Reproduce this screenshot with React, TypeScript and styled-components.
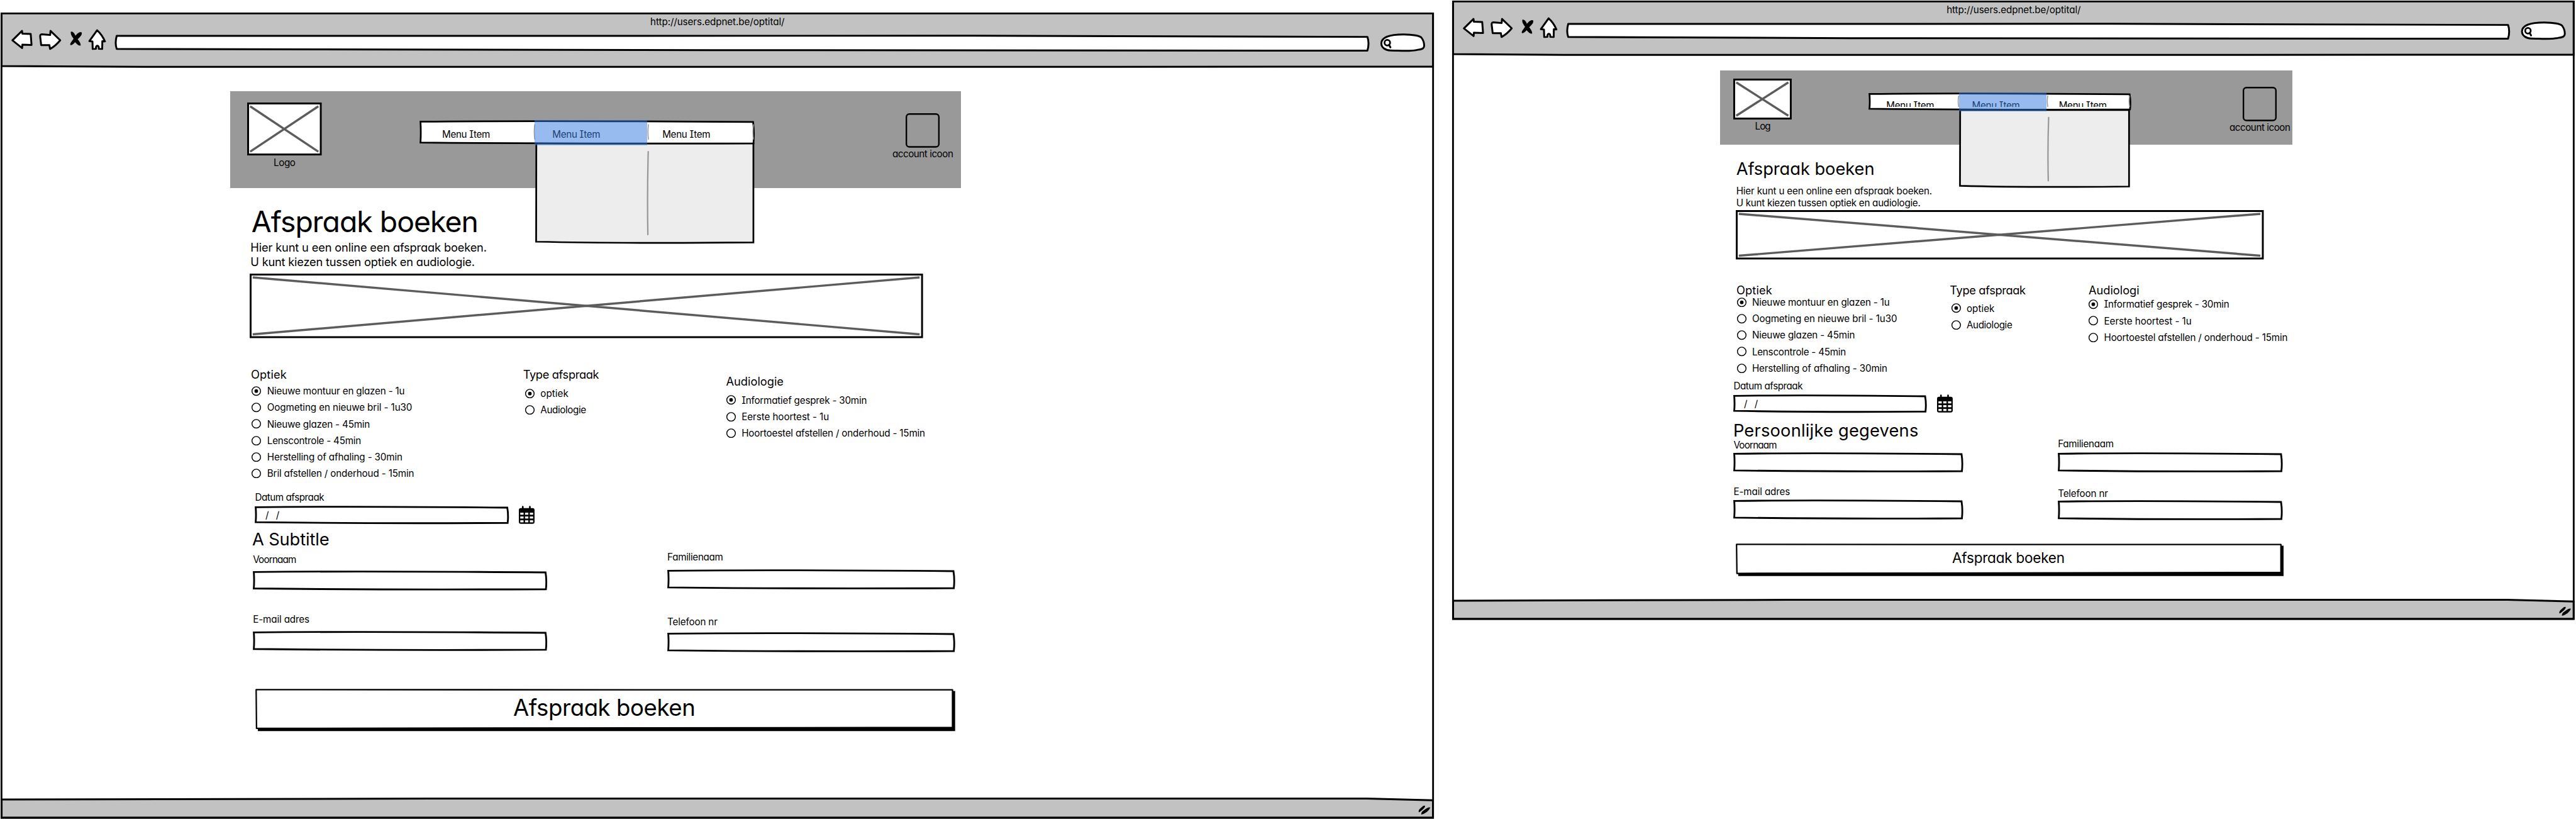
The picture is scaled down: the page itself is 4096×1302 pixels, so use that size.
import React, { useLayoutEffect, useRef, useState } from "react";
import styled, { createGlobalStyle } from "styled-components";

// All measures are in design units; the page is drawn at this ratio.
const RATIO = 4096 / 6894;
const u = (n: number) => `${(n * RATIO).toFixed(3)}px`;

const Global = createGlobalStyle`
  * { box-sizing: border-box; }
  html, body { margin: 0; background: #fff; }
  body {
    font-family: Inter, "Open Sans", "Liberation Sans", sans-serif;
    font-feature-settings: "cv11", "cv08", "calt" 0;
    color: #000;
  }
`;

/* ---------- primitives ---------- */

const Line = styled.div<{ $size: number; $mt?: number; $ml?: number; $weight?: number }>`
  flex: none;
  width: max-content;
  margin-top: ${(p) => u(p.$mt ?? 0)};
  margin-left: ${(p) => u(p.$ml ?? 0)};
  font-size: ${(p) => u(p.$size)};
  line-height: ${(p) => u(p.$size)};
  font-weight: ${(p) => p.$weight ?? 400};
  white-space: pre;
`;

type TextProps = { children: string; fit: number; size?: number; mt?: number; ml?: number; weight?: number };

// A line of text whose tracking is adjusted so that it spans `fit` units.
function Text({ children, fit, size = 25.6, mt, ml, weight }: TextProps) {
  const ref = useRef<HTMLDivElement>(null);
  const [tracking, setTracking] = useState(0);
  useLayoutEffect(() => {
    const el = ref.current;
    if (!el) return;
    el.style.letterSpacing = "0px";
    const natural = el.getBoundingClientRect().width;
    setTracking((fit * RATIO - natural) / children.length);
  }, [children, fit]);
  return (
    <Line ref={ref} $size={size} $mt={mt} $ml={ml} $weight={weight} style={{ letterSpacing: `${tracking}px` }}>
      {children}
    </Line>
  );
}

const Outline = styled.svg`
  position: absolute;
  inset: 0;
  width: 100%;
  height: 100%;
  overflow: visible;
  pointer-events: none;
`;

const wobble = (w: number, h: number) =>
  `M2.6,4 Q${w * 0.36},1 ${w - 4},5 Q${w - 0.5},${h / 2} ${w - 3},${h - 3} Q${w * 0.45},${h - 1} 2.6,${h - 5} Q4.2,${h / 2} 2.6,4Z`;

const Box = styled.div<{ $w: number; $h: number; $mt?: number; $ml?: number }>`
  position: relative;
  flex: none;
  width: ${(p) => u(p.$w)};
  height: ${(p) => u(p.$h)};
  margin-top: ${(p) => u(p.$mt ?? 0)};
  margin-left: ${(p) => u(p.$ml ?? 0)};
`;

const FieldBox = styled(Box)`
  display: flex;
  align-items: center;
`;

const Slashes = styled.span`
  position: relative;
  padding-left: ${u(28)};
  font-size: ${u(25.6)};
  line-height: ${u(25.6)};
  word-spacing: ${u(11.5)};
`;

function Field({ w, h, mt, value }: { w: number; h: number; mt?: number; value?: string }) {
  return (
    <FieldBox $w={w} $h={h} $mt={mt}>
      <Outline viewBox={`0 0 ${w} ${h}`}>
        <path d={wobble(w, h)} fill="#fff" stroke="#000" strokeWidth={4.8} strokeLinejoin="miter" />
      </Outline>
      {value && <Slashes>{value}</Slashes>}
    </FieldBox>
  );
}

function Placeholder({ w, h, mt, ml }: { w: number; h: number; mt?: number; ml?: number }) {
  return (
    <Box $w={w} $h={h} $mt={mt} $ml={ml}>
      <Outline viewBox={`0 0 ${w} ${h}`}>
        <rect x={2.5} y={2.5} width={w - 5} height={h - 5} fill="#fff" stroke="#000" strokeWidth={5} />
        <path d={`M8,10 L${w - 9},${h - 10} M8,${h - 10} L${w - 9},10`} stroke="#5c5c5e" strokeWidth={5.8} />
      </Outline>
    </Box>
  );
}

/* ---------- browser chrome ---------- */

const Canvas = styled.main`
  display: flex;
  align-items: flex-start;
  width: ${u(6894)};
  height: ${u(2192)};
  overflow: hidden;
`;

const Frame = styled.section<{ $w: number; $h: number; $mt: number; $ml: number }>`
  position: relative;
  display: flex;
  flex-direction: column;
  flex: none;
  width: ${(p) => u(p.$w)};
  height: ${(p) => u(p.$h)};
  margin-top: ${(p) => u(p.$mt)};
  margin-left: ${(p) => u(p.$ml)};
`;

const TopBar = styled.header`
  position: relative;
  flex: none;
  display: flex;
  justify-content: center;
  height: ${u(147.5)};
`;

const UrlSlot = styled.div`
  position: relative;
`;

const Body = styled.div<{ $x: number }>`
  flex: 1;
  min-height: 0;
  display: flex;
  flex-direction: column;
  align-items: flex-start;
  padding-left: ${(p) => u(p.$x)};
`;

const BottomBar = styled.footer`
  position: relative;
  flex: none;
  height: ${u(56)};
`;

const ink = { stroke: "#000", strokeWidth: 5, strokeLinejoin: "round" as const, strokeLinecap: "round" as const };

function Chrome({ w }: { w: number }) {
  const r = w - 3836;
  return (
    <Outline viewBox={`0 0 ${w} 147.5`}>
      <path d={`M2.3,2.3 H${w - 2.4} V144.7 L${w * 0.6},145.3 L${w * 0.1},145.3 L2.3,143.2Z`} fill="#c2c2c2" {...ink} strokeLinejoin="miter" />
      <g transform="translate(-2 -33)" fill="#fff" {...ink}>
        <path d="M33.3,107.3 L59,82 L60,89.5 L82.3,90.3 L84.5,119.6 L60,119 L59.3,128Z" />
        <path d="M135.3,82 L134.3,93 Q121,91.5 112,91 Q107.3,91 107.6,97 L110.3,120 L132.3,120 L134,130.4 Q149,122 161.3,107Z" />
        <path d="M260,80.4 Q273,92 281,110 L274,109.5 L273.6,130.4 L264.6,130 Q265,121.6 260.5,121.8 Q256.5,122 256.8,130 L248.2,130.4 L247.6,110.4 L239.3,109.3Z" />
        <path d={`M312.5,95.3 L${2600 + r},95 L${3660 + r},98 Q${3666 + r},115 ${3660 + r},135 L${1900 + r},133.4 L312.5,130.4 Q307,115 312.5,95.3Z`} />
        <g transform={`translate(${r} 0)`}>
          <path d="M3697.3,115 C3698,98 3722,91.5 3757,91.5 C3780,91.5 3803,95 3806,102 C3811,109 3812,116 3812,122 C3811.5,129 3808,130.5 3795,132.5 C3775,138 3745,134.5 3722,134.3 C3708,134 3697.5,127 3697.3,115Z" />
          <circle cx="3713.3" cy="113.6" r="7.4" strokeWidth="4.6" />
          <path d="M3718,119.5 L3721.6,126" />
        </g>
      </g>
      <g transform="translate(-2 -33)" fill="#000">
        <path d="M190,84 Q197,82 202,95 Q206,88 213,85.5 Q220,84 219,89 Q219,95 208,104 Q217,115 216,121 Q211,123.5 201,112 Q195,120 189,120 Q186,118 192,110 Q195,106 197,103 Q187,90 190,84Z" />
      </g>
    </Outline>
  );
}

function Grip({ w }: { w: number }) {
  return (
    <Outline viewBox={`0 0 ${w} 56`}>
      <path d={`M2.3,5 L${w * 0.3},2.6 L${w - 180},2.6 L${w - 2.4},7 V53.6 H2.3Z`} fill="#c2c2c2" {...ink} strokeLinejoin="miter" />
      <g transform={`translate(${w} 0)`} fill="#000">
        <path d="M-40.5,39 Q-42,33 -34,27 Q-27,19.5 -23.5,22 Q-23,26 -29,31 Q-36,38 -40.5,39Z" />
        <path d="M-33.5,45.5 Q-35,39 -27,34 Q-15,24 -9.5,26.5 Q-12,33 -18,38 Q-28,45 -33.5,45.5Z" />
      </g>
    </Outline>
  );
}

/* ---------- site header ---------- */

const SiteHeader = styled.div<{ $w: number; $h: number; $mt: number }>`
  flex: none;
  display: flex;
  align-items: flex-start;
  width: ${(p) => u(p.$w)};
  height: ${(p) => u(p.$h)};
  margin-top: ${(p) => u(p.$mt)};
  background: #999;
`;

const Captioned = styled.div<{ $mt: number; $ml: number }>`
  flex: none;
  display: flex;
  flex-direction: column;
  align-items: center;
  margin-top: ${(p) => u(p.$mt)};
  margin-left: ${(p) => u(p.$ml)};
`;

const MenuItem = styled.div<{ $w: number; $pl: number; $pt: number; $clip?: number }>`
  position: relative;
  flex: none;
  width: ${(p) => u(p.$w)};
  height: ${(p) => (p.$clip ? u(p.$clip) : "100%")};
  padding: ${(p) => `${u(p.$pt)} 0 0 ${u(p.$pl)}`};
  overflow: hidden;
`;

const MenuBar = styled(Box)`
  display: flex;
  align-items: flex-start;
`;

const Highlight = styled.div<{ $x: number; $w: number }>`
  position: absolute;
  top: 0;
  bottom: ${u(-1.2)};
  left: ${(p) => u(p.$x)};
  width: ${(p) => u(p.$w)};
  background: rgba(53, 122, 224, 0.51);
`;

const DropPanel = styled.div<{ $x: number; $y: number; $w: number; $h: number }>`
  position: absolute;
  left: ${(p) => u(p.$x)};
  top: ${(p) => u(p.$y)};
  width: ${(p) => u(p.$w)};
  height: ${(p) => u(p.$h)};
`;

type MenuSpec = {
  ml: number; mt: number; w: number; h: number; pt: number; clip?: number; seams: number[];
  items: { w: number; pl: number }[];
  drop: { x: number; y: number; w: number; h: number; split: number; from: number; to: number };
};

function Menu({ m }: { m: MenuSpec }) {
  const d = m.drop;
  const [a, b] = m.items;
  return (
    <MenuBar $w={m.w} $h={m.h} $mt={m.mt} $ml={m.ml}>
      <DropPanel $x={d.x} $y={d.y} $w={d.w} $h={d.h}>
        <Outline viewBox={`0 0 ${d.w} ${d.h}`}>
          <path d={`M3,0 H${d.w - 3} L${d.w - 3},${d.h - 3} Q${d.w * 0.4},${d.h} 2.5,${d.h - 5}Z`} fill="#ededed" {...ink} strokeWidth={4.6} strokeLinejoin="miter" />
          <path d={`M${d.split + 1},${d.from} Q${d.split - 2},${(d.from + d.to) / 2} ${d.split},${d.to}`} fill="none" stroke="#999" strokeWidth={3.8} strokeLinecap="round" />
        </Outline>
      </DropPanel>
      <Outline viewBox={`0 0 ${m.w} ${m.h}`}>
        <path d={wobble(m.w, m.h)} fill="#fff" {...ink} strokeWidth={4.6} strokeLinejoin="miter" />
        {m.seams.map((x) => (
          <path key={x} d={`M${x},${m.h * 0.17} q-3,${m.h * 0.3} 0,${m.h * 0.63}`} fill="none" stroke="#999" strokeWidth={2.6} />
        ))}
      </Outline>
      {m.items.map((it, i) => (
        <MenuItem key={i} $w={it.w} $pl={it.pl} $pt={m.pt} $clip={m.clip}>
          <Text fit={128}>Menu Item</Text>
        </MenuItem>
      ))}
      <Highlight $x={a.w} $w={b.w} />
    </MenuBar>
  );
}

/* ---------- options ---------- */

const Groups = styled.div<{ $mt: number; $ml: number; $cols: number[] }>`
  flex: none;
  display: grid;
  grid-template-columns: ${(p) => p.$cols.map(u).join(" ")} auto;
  align-items: start;
  margin-top: ${(p) => u(p.$mt)};
  margin-left: ${(p) => u(p.$ml)};
`;

const Column = styled.div`
  display: flex;
  flex-direction: column;
  align-items: flex-start;
`;

const Options = styled.div<{ $mt: number; $ml: number }>`
  margin-top: ${(p) => u(p.$mt)};
  margin-left: ${(p) => u(p.$ml)};
`;

const Option = styled.label`
  display: flex;
  align-items: center;
  gap: ${u(15)};
  height: ${u(44)};
`;

const Radio = styled.svg`
  flex: none;
  width: ${u(26)};
  height: ${u(26)};
`;

type Group = { title: string; fit: number; mt?: number; gap: number; indent: number; rows: [string, number][] };

function OptionGroup({ g }: { g: Group }) {
  return (
    <Column>
      <Text size={30.7} fit={g.fit} mt={g.mt}>{g.title}</Text>
      <Options $mt={g.gap} $ml={g.indent}>
        {g.rows.map(([label, fit], i) => (
          <Option key={label}>
            <Radio viewBox="0 0 26 26">
              <circle cx="12.6" cy="13" r="11.5" fill="#fff" stroke="#000" strokeWidth="2.4" />
              {i === 0 && <circle cx="12.6" cy="13" r="4.8" />}
            </Radio>
            <Text fit={fit}>{label}</Text>
          </Option>
        ))}
      </Options>
    </Column>
  );
}

/* ---------- form ---------- */

const DateRow = styled.div<{ $ml: number }>`
  flex: none;
  display: flex;
  align-items: flex-start;
  gap: ${u(26.5)};
  margin-top: ${u(10.5)};
  margin-left: ${(p) => u(p.$ml)};
`;

const CalendarSvg = styled.svg`
  flex: none;
  width: ${u(42)};
  height: ${u(49)};
`;

function Calendar() {
  return (
    <CalendarSvg viewBox="0 0 42 49">
      <path d="M10.5,2.5 V10 M29.5,2.5 V10" stroke="#000" strokeWidth="4.4" strokeLinecap="round" />
      <rect x="0" y="6.5" width="42" height="42" rx="5.5" />
      {[18.6, 28.8, 39].map((y) =>
        [3.8, 16.6, 29.4].map((x) => <rect key={`${x}-${y}`} x={x} y={y} width="8.8" height="5.4" fill="#fff" />)
      )}
    </CalendarSvg>
  );
}

const SubmitButton = styled.button<{ $w: number; $h: number; $mt: number; $ml: number; $pt: number }>`
  position: relative;
  flex: none;
  display: flex;
  justify-content: center;
  align-items: flex-start;
  width: ${(p) => u(p.$w)};
  height: ${(p) => u(p.$h)};
  margin: ${(p) => `${u(p.$mt)} 0 0 ${u(p.$ml)}`};
  padding: ${(p) => `${u(p.$pt)} ${u(7)} 0 0`};
  appearance: none;
  border: 0;
  background: none;
  color: inherit;
  font: inherit;
  font-feature-settings: inherit;
`;

const ButtonLabel = styled.div`
  position: relative;
`;

type FormCell = { label: string; fit: number; mt: number; gap: number; h: number };

type PageSpec = {
  frame: { w: number; h: number; mt: number; ml: number };
  x: number;
  header: { w: number; h: number; mt: number };
  logo: { ml: number; mt: number; w: number; h: number; gap: number; text: string; fit: number };
  menu: MenuSpec;
  account: { ml: number; mt: number; gap: number };
  title: { size: number; fit: number; mt: number; ml: number };
  intro: { size: number; ml: number; mt: [number, number]; fit: [number, number] };
  banner: { w: number; h: number; mt: number; ml: number };
  groups: { mt: number; ml: number; cols: number[]; list: Group[] };
  date: { mt: number; ml: number; w: number };
  subtitle: { text: string; fit: number; mt: number; ml: number };
  form: { ml: number; cols: number[]; widths: number[]; cells: FormCell[][] };
  button: { mt: number; ml: number; w: number; h: number; pt: number; size: number; fit: number };
};

function BrowserPage({ p }: { p: PageSpec }) {
  const { frame: f, button: b } = p;
  return (
    <Frame $w={f.w} $h={f.h} $mt={f.mt} $ml={f.ml}>
      <Outline viewBox={`0 0 ${f.w} ${f.h}`}>
        <rect x={2.3} y={2.3} width={f.w - 4.7} height={f.h - 4.7} fill="none" stroke="#000" strokeWidth={4.8} />
      </Outline>
      <TopBar>
        <Chrome w={f.w} />
        <UrlSlot>
          <Text fit={359} mt={12.8}>http://users.edpnet.be/optital/</Text>
        </UrlSlot>
      </TopBar>
      <Body $x={p.x}>
        <SiteHeader $w={p.header.w} $h={p.header.h} $mt={p.header.mt}>
          <Captioned $mt={p.logo.mt} $ml={p.logo.ml}>
            <Placeholder w={p.logo.w} h={p.logo.h} />
            <Text fit={p.logo.fit} mt={p.logo.gap}>{p.logo.text}</Text>
          </Captioned>
          <Menu m={p.menu} />
          <Captioned $mt={p.account.mt} $ml={p.account.ml}>
            <Box $w={91} $h={92}>
              <Outline viewBox="0 0 91 92">
                <rect x="2" y="2" width="87" height="88" rx="8" fill="none" stroke="#000" strokeWidth="4" />
              </Outline>
            </Box>
            <Text fit={162.5} mt={p.account.gap}>account icoon</Text>
          </Captioned>
        </SiteHeader>
        <Text {...p.title}>Afspraak boeken</Text>
        <Text size={p.intro.size} ml={p.intro.ml} mt={p.intro.mt[0]} fit={p.intro.fit[0]}>Hier kunt u een online een afspraak boeken.</Text>
        <Text size={p.intro.size} ml={p.intro.ml} mt={p.intro.mt[1]} fit={p.intro.fit[1]}>U kunt kiezen tussen optiek en audiologie.</Text>
        <Placeholder {...p.banner} />
        <Groups $mt={p.groups.mt} $ml={p.groups.ml} $cols={p.groups.cols}>
          {p.groups.list.map((g) => <OptionGroup key={g.title} g={g} />)}
        </Groups>
        <Text fit={184.5} mt={p.date.mt} ml={p.date.ml}>Datum afspraak</Text>
        <DateRow $ml={p.date.ml}>
          <Field w={p.date.w} h={49} value="/ /" />
          <Calendar />
        </DateRow>
        <Text size={46} fit={p.subtitle.fit} mt={p.subtitle.mt} ml={p.subtitle.ml}>{p.subtitle.text}</Text>
        <Groups $mt={0} $ml={p.form.ml} $cols={p.form.cols}>
          {p.form.cells.map((cells, c) => (
            <Column key={c}>
              {cells.map((cell) => (
                <React.Fragment key={cell.label}>
                  <Text fit={cell.fit} mt={cell.mt}>{cell.label}</Text>
                  <Field w={p.form.widths[c]} h={cell.h} mt={cell.gap} />
                </React.Fragment>
              ))}
            </Column>
          ))}
        </Groups>
        <SubmitButton type="button" $w={b.w} $h={b.h} $mt={b.mt} $ml={b.ml} $pt={b.pt}>
          <Outline viewBox={`0 0 ${b.w} ${b.h}`}>
            <path d={`M6.5,6 H${b.w} V${b.h} H6.5Z`} />
            <path d={`M2,2.4 L${b.w - 7},2.8 L${b.w - 7},${b.h - 9.5} Q${b.w * 0.5},${b.h - 7} 3,${b.h - 7}Z`} fill="#fff" stroke="#000" strokeWidth={3.8} strokeLinejoin="round" />
          </Outline>
          <ButtonLabel>
            <Text size={b.size} fit={b.fit}>Afspraak boeken</Text>
          </ButtonLabel>
        </SubmitButton>
      </Body>
      <BottomBar>
        <Grip w={f.w} />
      </BottomBar>
    </Frame>
  );
}

const optiekRows: [string, number][] = [
  ["Nieuwe montuur en glazen - 1u", 368],
  ["Oogmeting en nieuwe bril - 1u30", 388],
  ["Nieuwe glazen - 45min", 275],
  ["Lenscontrole - 45min", 251],
  ["Herstelling of afhaling - 30min", 362],
];
const typeRows: [string, number][] = [["optiek", 75], ["Audiologie", 122]];
const audioRows: [string, number][] = [
  ["Informatief gesprek - 30min", 335],
  ["Eerste hoortest - 1u", 234],
  ["Hoortoestel afstellen / onderhoud - 15min", 491],
];

const large: PageSpec = {
  frame: { w: 3836, h: 2157, mt: 33, ml: 2 },
  x: 614,
  header: { w: 1955.5, h: 259.8, mt: 63.7 },
  logo: { ml: 45.5, mt: 30, w: 199.5, h: 141.5, gap: 6.4, text: "Logo", fit: 58 },
  menu: {
    ml: 261.7, mt: 78, w: 897, h: 65, pt: 24.7, seams: [308.5, 613, 894],
    items: [{ w: 308, pl: 60.5 }, { w: 301, pl: 47.5 }, { w: 288, pl: 41 }],
    drop: { x: 309.5, y: 62, w: 587, h: 268, split: 301.5, from: 22, to: 244 },
  },
  account: { ml: 368.5, mt: 58.2, gap: 3.8 },
  title: { size: 78, fit: 606, mt: 50.6, ml: 57 },
  intro: { size: 30.7, ml: 54.5, mt: [13.9, 8], fit: [632, 600] },
  banner: { w: 1802, h: 172.5, mt: 15.6, ml: 53 },
  groups: {
    mt: 82.2, ml: 55.5, cols: [728.3, 543.4],
    list: [
      { title: "Optiek", fit: 96, gap: 7.9, indent: 2.5, rows: [...optiekRows, ["Bril afstellen / onderhoud - 15min", 393]] },
      { title: "Type afspraak", fit: 203, gap: 14.1, indent: 5.5, rows: typeRows },
      { title: "Audiologie", fit: 154, mt: 18.3, gap: 13.8, indent: 0.5, rows: audioRows },
    ],
  },
  date: { mt: 29.1, ml: 66.5, w: 680 },
  subtitle: { text: "A Subtitle", fit: 206, mt: 18.5, ml: 59 },
  form: {
    ml: 61, cols: [1109], widths: [787.5, 770],
    cells: [
      [
        { label: "Voornaam", fit: 115, mt: 16.4, gap: 16.5, h: 53 },
        { label: "E-mail adres", fit: 151, mt: 66.4, gap: 17, h: 53.4 },
      ],
      [
        { label: "Familienaam", fit: 149, mt: 10.7, gap: 20.2, h: 53.5 },
        { label: "Telefoon nr", fit: 134, mt: 74.4, gap: 14.5, h: 53.5 },
      ],
    ],
  },
  button: { mt: 97.5, ml: 68, w: 1873, h: 113, pt: 20.4, size: 61.6, fit: 487 },
};

const small: PageSpec = {
  frame: { w: 3004, h: 1657, mt: 1.3, ml: 49 },
  x: 717,
  header: { w: 1531.4, h: 199.6, mt: 39.3 },
  logo: { ml: 35, mt: 22.1, w: 156.4, h: 109.3, gap: 6.1, text: "Log", fit: 41 },
  menu: {
    ml: 205.7, mt: 59.9, w: 703, h: 48.4, pt: 21.1, clip: 38.4, seams: [241.5, 480, 699],
    items: [{ w: 241.4, pl: 47 }, { w: 235.1, pl: 35 }, { w: 226.5, pl: 32.5 }],
    drop: { x: 242, y: 46, w: 458, h: 207.5, split: 238.8, from: 20, to: 189 },
  },
  account: { ml: 262.5, mt: 44.1, gap: 3.5 },
  title: { size: 46, fit: 370, mt: 41.8, ml: 42.5 },
  intro: { size: 25.6, ml: 42.5, mt: [22.2, 6.8], fit: [524, 493] },
  banner: { w: 1413, h: 132, mt: 6.5, ml: 40.7 },
  groups: {
    mt: 66.2, ml: 43, cols: [571, 371.5],
    list: [
      { title: "Optiek", fit: 96, gap: -3.9, indent: 1, rows: optiekRows },
      { title: "Type afspraak", fit: 203, gap: 12.1, indent: 4, rows: typeRows },
      { title: "Audiologi", fit: 136, gap: 1.8, indent: 0.5, rows: audioRows },
    ],
  },
  date: { mt: 12.9, ml: 35.5, w: 517.5 },
  subtitle: { text: "Persoonlijke gegevens", fit: 496, mt: 25, ml: 34.5 },
  form: {
    ml: 35.5, cols: [868], widths: [615, 601.5],
    cells: [
      [
        { label: "Voornaam", fit: 115, mt: 2.9, gap: 5.5, h: 53.5 },
        { label: "E-mail adres", fit: 151, mt: 39.4, gap: 7.5, h: 53.5 },
      ],
      [
        { label: "Familienaam", fit: 149, mt: -1.1, gap: 9.5, h: 53.5 },
        { label: "Telefoon nr", fit: 134, mt: 44, gap: 4.7, h: 53.5 },
      ],
    ],
  },
  button: { mt: 63.7, ml: 41.5, w: 1466, h: 87, pt: 20.2, size: 38, fit: 301 },
};

export default function App() {
  return (
    <>
      <Global />
      <Canvas>
        <BrowserPage p={large} />
        <BrowserPage p={small} />
      </Canvas>
    </>
  );
}
